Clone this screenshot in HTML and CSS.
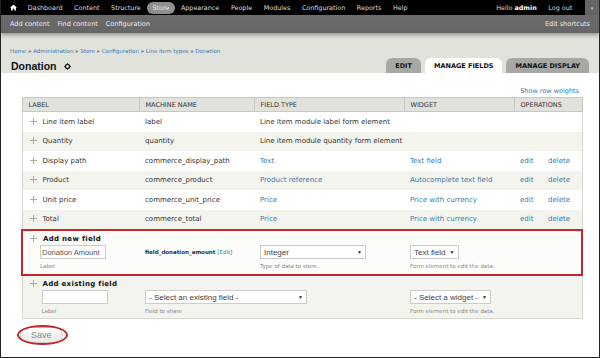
FILE: index.html
```html
<!DOCTYPE html>
<html lang="en">
<head>
    <meta charset="UTF-8">
    <title>Donation | Manage fields</title>
    <link rel="stylesheet" href="styles.css">
</head>
<body>
    <div class="frame">
        <!-- toolbar -->
        <div class="toolbar">
            <div class="menu">
                <span class="home">
                    <svg width="7" height="7" viewBox="0 0 8 8"><path d="M4 0.5 L8 4.2 L6.8 4.2 L6.8 7.5 L4.9 7.5 L4.9 5.3 L3.1 5.3 L3.1 7.5 L1.2 7.5 L1.2 4.2 L0 4.2 Z" fill="#fff"/></svg>
                </span>
                <span class="item">Dashboard</span>
                <span class="item">Content</span>
                <span class="item">Structure</span>
                <span class="item active">Store</span>
                <span class="item">Appearance</span>
                <span class="item">People</span>
                <span class="item">Modules</span>
                <span class="item">Configuration</span>
                <span class="item">Reports</span>
                <span class="item">Help</span>
            </div>
            <div class="user">
                <span class="item">Hello <b>admin</b></span>
                <span class="item">Log out</span>
                <span class="toggle">&#9662;</span>
            </div>
        </div>
        <div class="shortcuts">
            <div class="links">
                <span>Add content</span>
                <span>Find content</span>
                <span>Configuration</span>
            </div>
            <span>Edit shortcuts</span>
        </div>

        <!-- header -->
        <div class="branding">
            <div class="titles">
                <div class="breadcrumb">
                    <a>Home</a> &raquo; <a>Administration</a> &raquo; <a>Store</a> &raquo; <a>Configuration</a> &raquo; <a>Line item types</a> &raquo; <a>Donation</a>
                </div>
                <h1>Donation
                    <svg class="gear" width="7" height="7" viewBox="0 0 8 8"><circle cx="4" cy="4" r="2.4" fill="none" stroke="#222" stroke-width="1.6"/><path d="M4 0.2 V1.6 M4 6.4 V7.8 M0.2 4 H1.6 M6.4 4 H7.8" stroke="#222" stroke-width="1.2"/></svg>
                </h1>
            </div>
            <ul class="tabs">
                <li>Edit</li>
                <li class="active">Manage fields</li>
                <li>Manage display</li>
            </ul>
        </div>

        <!-- page -->
        <div class="page">
            <div class="weights"><a>Show row weights</a></div>
            <table class="fields">
                <colgroup>
                    <col class="w-label">
                    <col class="w-machine">
                    <col class="w-type">
                    <col class="w-widget">
                    <col class="w-edit">
                    <col class="w-delete">
                </colgroup>
                <thead>
                    <tr>
                        <th>Label</th>
                        <th>Machine name</th>
                        <th>Field type</th>
                        <th>Widget</th>
                        <th colspan="2">Operations</th>
                    </tr>
                </thead>
                <tbody>
                    <tr class="odd">
                        <td><span class="drag"></span>Line item label</td>
                        <td>label</td>
                        <td colspan="4">Line item module label form element</td>
                    </tr>
                    <tr class="even">
                        <td><span class="drag"></span>Quantity</td>
                        <td>quantity</td>
                        <td colspan="4">Line item module quantity form element</td>
                    </tr>
                    <tr class="odd">
                        <td><span class="drag"></span>Display path</td>
                        <td>commerce_display_path</td>
                        <td><a>Text</a></td>
                        <td><a>Text field</a></td>
                        <td><a>edit</a></td>
                        <td><a>delete</a></td>
                    </tr>
                    <tr class="even">
                        <td><span class="drag"></span>Product</td>
                        <td>commerce_product</td>
                        <td><a>Product reference</a></td>
                        <td><a>Autocomplete text field</a></td>
                        <td><a>edit</a></td>
                        <td><a>delete</a></td>
                    </tr>
                    <tr class="odd">
                        <td><span class="drag"></span>Unit price</td>
                        <td>commerce_unit_price</td>
                        <td><a>Price</a></td>
                        <td><a>Price with currency</a></td>
                        <td><a>edit</a></td>
                        <td><a>delete</a></td>
                    </tr>
                    <tr class="even">
                        <td><span class="drag"></span>Total</td>
                        <td>commerce_total</td>
                        <td><a>Price</a></td>
                        <td><a>Price with currency</a></td>
                        <td><a>edit</a></td>
                        <td><a>delete</a></td>
                    </tr>
                    <tr class="add add-new">
                        <td class="first">
                            <div class="add-title"><span class="drag"></span>Add new field</div>
                            <div class="field-wrap">
                                <input type="text" class="text" value="Donation Amount">
                                <div class="desc">Label</div>
                            </div>
                        </td>
                        <td>
                            <div class="add-title">&nbsp;</div>
                            <div class="machine">field_donation_amount <a>[Edit]</a></div>
                        </td>
                        <td>
                            <div class="add-title">&nbsp;</div>
                            <div class="select type">Integer<span class="arrow">&#9660;</span></div>
                            <div class="desc">Type of data to store.</div>
                        </td>
                        <td colspan="3" class="last">
                            <div class="add-title">&nbsp;</div>
                            <div class="select">Text field<span class="arrow">&#9660;</span></div>
                            <div class="desc">Form element to edit the data.</div>
                        </td>
                    </tr>
                    <tr class="add add-existing">
                        <td>
                            <div class="add-title"><span class="drag"></span>Add existing field</div>
                            <div class="field-wrap">
                                <input type="text" class="text" value="">
                                <div class="desc">Label</div>
                            </div>
                        </td>
                        <td colspan="2">
                            <div class="add-title">&nbsp;</div>
                            <div class="select existing">- Select an existing field -<span class="arrow">&#9660;</span></div>
                            <div class="desc">Field to share</div>
                        </td>
                        <td colspan="3">
                            <div class="add-title">&nbsp;</div>
                            <div class="select">- Select a widget -<span class="arrow">&#9660;</span></div>
                            <div class="desc">Form element to edit the data.</div>
                        </td>
                    </tr>
                </tbody>
            </table>
            <div class="actions">
                <button class="save">Save</button>
            </div>
        </div>
    </div>
</body>
</html>
```

FILE: styles.css
```css
/* base */
body {
    margin: 0;
    font-family: 'DejaVu Sans', Verdana, sans-serif;
    font-size: 7px;
    color: #333;
}

a {
    color: #3a79ab;
    text-decoration: none;
}

.frame {
    width: 600px;
    height: 358px;
    box-sizing: border-box;
    border: 1px solid #222;
    border-top: 0;
    overflow: hidden;
    background-color: #fff;
}

/* toolbar */
.toolbar {
    height: 15px;
    background-color: #000;
    color: #ddd;
    display: flex;
    justify-content: space-between;
    align-items: center;
    font-size: 6.4px;
}

.toolbar .menu,
.toolbar .user {
    display: flex;
    align-items: center;
    height: 100%;
}

.toolbar .home {
    display: flex;
    padding: 0 5px 0 9px;
}

.toolbar .item {
    padding: 2px 5.8px;
    border-radius: 8px;
}

.toolbar .item.active {
    background-color: #8f8f8f;
    color: #e8e8e8;
}

.toolbar .item b {
    color: #fff;
}

.toolbar .toggle {
    width: 14px;
    height: 15px;
    margin-left: 7px;
    background-color: #666;
    color: #ccc;
    font-size: 5px;
    display: flex;
    align-items: center;
    justify-content: center;
}

.shortcuts {
    height: 18px;
    background: linear-gradient(#6b6b6b, #666);
    color: #eee;
    font-size: 6.5px;
    display: flex;
    justify-content: space-between;
    align-items: center;
    padding: 0 9px 0 9px;
    box-shadow: 0 2px 4px rgba(0, 0, 0, 0.35);
    position: relative;
}

.shortcuts .links {
    display: flex;
    gap: 8px;
}

/* branding */
.branding {
    background-color: #e1e2dc;
    display: flex;
    justify-content: space-between;
    align-items: flex-end;
    padding: 15px 10px 0 9px;
}

.breadcrumb {
    font-size: 5.5px;
    line-height: 7px;
    color: #333;
    margin-bottom: 5px;
}

.branding h1 {
    margin: 0 0 1px 1px;
    font-family: 'Liberation Sans', Arial, sans-serif;
    font-size: 10.5px;
    line-height: 12px;
    font-weight: bold;
    color: #111;
    display: flex;
    align-items: center;
    gap: 7px;
}

.tabs {
    list-style: none;
    margin: 0;
    padding: 0;
    display: flex;
    gap: 4px;
}

.tabs li {
    height: 15px;
    line-height: 16px;
    padding: 0 9px;
    background-color: #a7a8a3;
    border-radius: 6px 6px 0 0;
    text-transform: uppercase;
    font-weight: bold;
    font-size: 6.5px;
    color: #111;
}

.tabs li.active {
    background-color: #fff;
}

/* page */
.page {
    padding: 14px 20px 0 20px;
}

.weights {
    text-align: right;
    font-size: 6.5px;
    height: 10px;
}

.fields {
    width: 560px;
    border-collapse: collapse;
    table-layout: fixed;
    border: 1px solid #d8d8d2;
}

.w-label { width: 117px; }
.w-machine { width: 115px; }
.w-type { width: 150px; }
.w-widget { width: 110px; }
.w-edit { width: 28px; }
.w-delete { width: 40px; }

.fields th {
    background-color: #e1e2dc;
    text-transform: uppercase;
    font-weight: normal;
    text-align: left;
    font-size: 6.5px;
    height: 13px;
    padding: 0 0 0 6px;
    border: 1px solid #c8c8c2;
    color: #333;
}

.fields td {
    height: 19.5px;
    padding: 0 0 0 6px;
    white-space: nowrap;
    overflow: visible;
    vertical-align: middle;
}

.fields tr.odd td {
    background-color: #fff;
}

.fields tr.even td {
    background-color: #f3f4ee;
}

.drag {
    display: inline-block;
    vertical-align: middle;
    width: 7px;
    height: 7px;
    margin: -1px 6px 0 1px;
    background:
        linear-gradient(#aaa, #aaa) center / 1px 7px no-repeat,
        linear-gradient(#aaa, #aaa) center / 7px 1px no-repeat;
}

/* add field rows */
.fields tr.add td {
    vertical-align: top;
    height: auto;
}

.fields tr.add-new td {
    background-color: #fcfcfa;
    border-top: 2px solid #c1272d;
    border-bottom: 2px solid #c1272d;
    padding-top: 4px;
    padding-bottom: 5px;
}

.fields tr.add-new td.first {
    border-left: 2px solid #c1272d;
}

.fields tr.add-new td.last {
    border-right: 2px solid #c1272d;
}

.fields tr.add-existing td {
    background-color: #f3f4ee;
    padding-top: 4px;
    padding-bottom: 4px;
}

.add-title {
    font-weight: bold;
    font-size: 7px;
    color: #111;
    height: 10px;
    letter-spacing: 0.3px;
}

.field-wrap {
    padding-left: 11px;
}

.add-existing .field-wrap {
    padding-left: 13px;
}

.text {
    display: block;
    box-sizing: border-box;
    width: 66px;
    height: 14px;
    margin: 0;
    padding: 0 1px;
    border: 1px solid #ccc;
    font-family: 'Liberation Sans', Arial, sans-serif;
    font-size: 7.5px;
    color: #555;
    background-color: #fff;
}

.machine {
    font-size: 5.5px;
    font-weight: bold;
    color: #333;
    padding-top: 4px;
}

.machine a {
    font-weight: normal;
}

.select {
    display: inline-flex;
    justify-content: space-between;
    align-items: center;
    box-sizing: border-box;
    height: 14px;
    padding: 0 3px;
    border: 1px solid #ccc;
    background-color: #fff;
    font-family: 'Liberation Sans', Arial, sans-serif;
    font-size: 8px;
    color: #444;
    gap: 4px;
}

.select.type {
    width: 106px;
}

.select.existing {
    width: 162px;
}

.arrow {
    font-size: 5px;
    color: #222;
}

.desc {
    font-size: 5.5px;
    color: #888;
    margin-top: 4px;
}

/* save */
.actions {
    padding: 8px 0 0 0;
}

.save {
    position: relative;
    font-family: 'Liberation Sans', Arial, sans-serif;
    font-size: 9px;
    color: #888;
    background: linear-gradient(#fff, #e8e8e8);
    border: 1px solid #ccc;
    border-radius: 8px;
    padding: 2px 10px;
    margin-left: -1px;
}

.save:after {
    content: '';
    position: absolute;
    left: -4px;
    right: -6px;
    top: -3px;
    bottom: -3px;
    border: 2px solid #c1272d;
    border-radius: 50%;
}
```
